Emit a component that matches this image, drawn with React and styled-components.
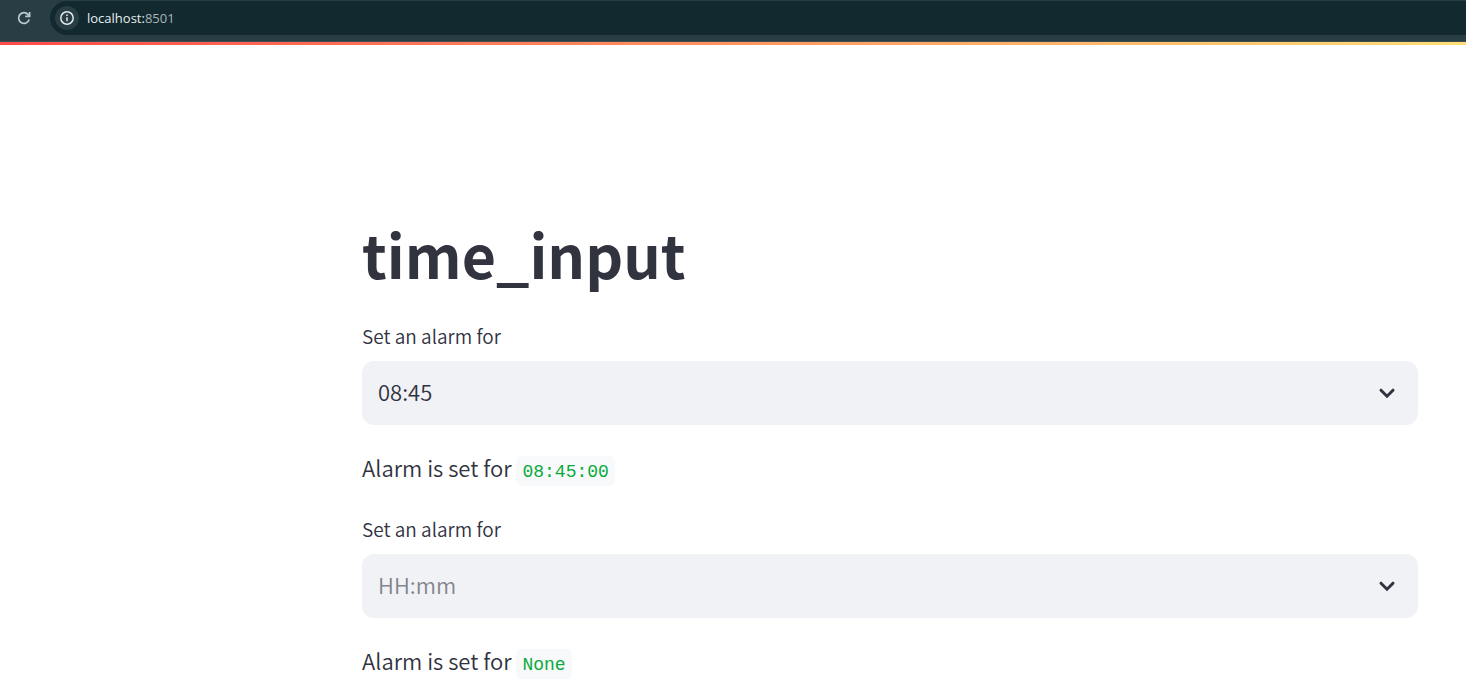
import React, { useId, useState } from "react";
import styled, { createGlobalStyle } from "styled-components";

const sans = `"Noto Sans CJK SC", "Open Sans", sans-serif`;
const mono = `"Liberation Mono", monospace`;

const GlobalStyle = createGlobalStyle`
  *, *::before, *::after { box-sizing: border-box; }
  body {
    margin: 0;
    background: #ffffff;
    color: #31333f;
    font-family: ${sans};
    font-weight: 350;
  }
`;

const Toolbar = styled.header`
  display: flex;
  align-items: flex-start;
  height: 42px;
  padding: 1px 0 0 16px;
  gap: 18px;
  background: #283e44;
  border-bottom: 1px solid #3b4f53;
`;

const ReloadButton = styled.button`
  display: flex;
  align-items: center;
  justify-content: center;
  width: 16px;
  height: 34px;
  padding: 0;
  border: 0;
  background: none;
  color: #b9cbd0;
`;

const AddressBar = styled.div`
  display: flex;
  flex: 1;
  align-items: center;
  gap: 8px;
  height: 34px;
  padding-left: 5px;
  border-radius: 17px 0 0 17px;
  background: #12292f;
`;

const SiteInfoButton = styled.button`
  display: flex;
  align-items: center;
  justify-content: center;
  width: 24px;
  height: 24px;
  padding: 0;
  border: 0;
  border-radius: 50%;
  background: #283e44;
  color: #e3e9ea;
`;

const Address = styled.a`
  color: #a9b6b9;
  font-family: "Open Sans", sans-serif;
  font-size: 13px;
  font-weight: 400;
  line-height: 20px;
  text-decoration: none;
`;

const Host = styled.span`
  color: #e6eeef;
`;

const Decoration = styled.div`
  height: 3px;
  background: linear-gradient(90deg, #ff4b4b, #ffde77);
`;

const Main = styled.main`
  display: flex;
  flex-direction: column;
  padding: 169px 48px 0 362px;
`;

const Title = styled.h1`
  margin: 0;
  padding-bottom: 24px;
  font-size: 59px;
  font-weight: 700;
  line-height: 80px;
`;

const Section = styled.section`
  display: flex;
  flex-direction: column;
  padding-bottom: 25px;
`;

const Label = styled.label`
  padding-bottom: 7px;
  font-size: 19px;
  line-height: 36px;
`;

const Field = styled.div`
  position: relative;
  display: flex;
`;

const Select = styled.select`
  flex: 1;
  height: 64px;
  padding: 0 56px 4px 16px;
  border: 0;
  border-radius: 12px;
  appearance: none;
  background: #f0f2f6;
  color: ${(p) => (p.$empty ? "#83858f" : "#31333f")};
  font-family: ${sans};
  font-size: 22px;
  font-weight: inherit;
`;

const Chevron = styled.svg`
  position: absolute;
  top: 50%;
  right: 19px;
  width: 24px;
  height: 24px;
  transform: translateY(-50%);
  pointer-events: none;
`;

const Result = styled.p`
  margin: 0;
  padding-top: 23px;
  font-size: 22px;
  line-height: 38px;
`;

const Code = styled.code`
  padding: 6px 6px 4px;
  border-radius: 6px;
  background: #f8f9fb;
  color: #09ab3b;
  font-family: ${mono};
  font-size: 18px;
  font-weight: 400;
  line-height: 22px;
`;

function TimeInput({ initial }) {
  const id = useId();
  const [value, setValue] = useState(initial);
  return (
    <Section>
      <Label htmlFor={id}>Set an alarm for</Label>
      <Field>
        <Select
          id={id}
          value={value}
          $empty={!value}
          onChange={(e) => setValue(e.target.value)}
        >
          <option value="">HH:mm</option>
          <option value="08:30">08:30</option>
          <option value="08:45">08:45</option>
          <option value="09:00">09:00</option>
        </Select>
        <Chevron viewBox="0 0 24 24" aria-hidden="true">
          <path
            d="M6 9.2 L12 15.2 L18 9.2"
            fill="none"
            stroke="#31333f"
            strokeWidth="3"
            strokeLinecap="round"
          />
        </Chevron>
      </Field>
      <Result>
        Alarm is set for <Code>{value ? `${value}:00` : "None"}</Code>
      </Result>
    </Section>
  );
}

export default function App() {
  return (
    <>
      <GlobalStyle />
      <Toolbar>
        <ReloadButton aria-label="Reload">
          <svg width="16" height="16" viewBox="0 0 16 16" fill="none" aria-hidden="true">
            <path d="M13.2 9.6 A5.4 5.4 0 1 1 12.2 4.6 L13.6 6" stroke="currentColor" strokeWidth="1.7" />
            <path d="M13.6 2 V6.4 H9.2" stroke="currentColor" strokeWidth="1.7" />
          </svg>
        </ReloadButton>
        <AddressBar>
          <SiteInfoButton aria-label="View site information">
            <svg width="16" height="16" viewBox="0 0 16 16" fill="none" aria-hidden="true">
              <circle cx="8" cy="8" r="6.2" stroke="currentColor" strokeWidth="1.5" />
              <path d="M8 7.2 V11.2 M8 4.6 V6.1" stroke="currentColor" strokeWidth="1.5" />
            </svg>
          </SiteInfoButton>
          <Address href="http://localhost:8501">
            <Host>localhost:</Host>8501
          </Address>
        </AddressBar>
      </Toolbar>
      <Decoration />
      <Main>
        <Title>time_input</Title>
        <TimeInput initial="08:45" />
        <TimeInput initial="" />
      </Main>
    </>
  );
}
